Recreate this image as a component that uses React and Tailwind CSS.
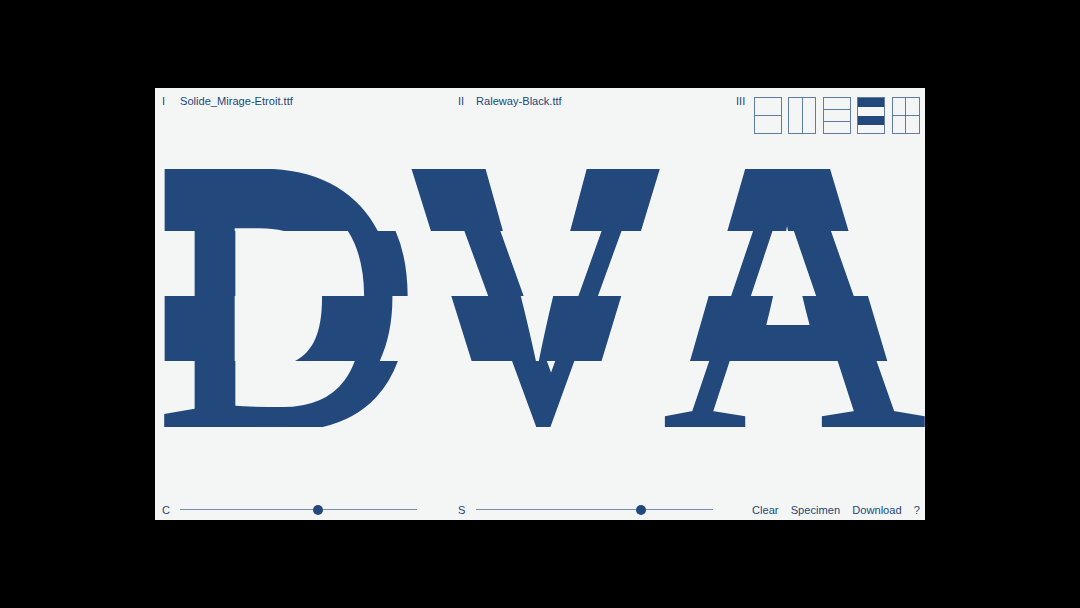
function SansWord({ className }) {
  return (
    <div className={`flex text-[355px] leading-[400px] h-[400px] font-black text-[#22487c] [font-family:Inter,sans-serif] ${className}`}>
      <span className="block shrink-0 w-[231px] ml-[-7px] origin-left scale-x-[1]">D</span>
      <span className="block shrink-0 w-[248px] ml-[25px] origin-left scale-x-[0.933]">V</span>
      <span className="block shrink-0 w-[245px] ml-[12px] origin-left scale-x-[0.886]">A</span>
    </div>
  );
}

function SerifWord({ className }) {
  return (
    <div className={`flex text-[390px] leading-[400px] h-[400px] font-normal text-[#22487c] [-webkit-text-stroke:1.5px_#22487c] [font-family:'Liberation_Serif',serif] ${className}`}>
      <span className="block shrink-0 w-[243px] ml-[2px] origin-left scale-x-[0.93] [-webkit-text-stroke:7px_#22487c]">D</span>
      <span className="block shrink-0 w-[240px] ml-[20px] origin-left scale-x-[0.87]">V</span>
      <span className="block shrink-0 w-[260px] ml-[2px] origin-left scale-x-[0.94]">A</span>
    </div>
  );
}

function Slider({ label, pos }) {
  return (
    <div className="flex items-center">
      <span className="w-[18px]">{label}</span>
      <div className="flex w-[237px] items-center">
        <div className={`h-px bg-[#22487c]/60 ${pos}`} />
        <div className="size-[10px] shrink-0 rounded-full bg-[#22487c]" />
        <div className="h-px flex-1 bg-[#22487c]/60" />
      </div>
    </div>
  );
}

function Box({ children, className = "" }) {
  return <div className={`h-[37px] w-[28px] border border-[#22487c]/70 ${className}`}>{children}</div>;
}

export default function App() {
  return (
    <div className="flex h-[608px] w-[1080px] items-center justify-center bg-black [font-family:'Liberation_Sans',sans-serif] text-[11.1px] text-[#22487c]">
      <div className="flex h-[432px] w-[770px] flex-col overflow-hidden bg-[#f4f6f5]">
        <header className="flex h-[81px] shrink-0 items-start pt-[6px] pl-[7px] pr-[5px]">
          <div className="flex w-[296px] leading-[14px]">
            <span className="w-[18px]">I</span>
            <span>Solide_Mirage-Etroit.ttf</span>
          </div>
          <div className="flex w-[278px] leading-[14px]">
            <span className="w-[18px]">II</span>
            <span>Raleway-Black.ttf</span>
          </div>
          <span className="w-[18px] leading-[14px]">III</span>
          <div className="mt-[3px] flex gap-[6.4px]">
            <Box><div className="mt-[17px] h-px bg-[#22487c]/70" /></Box>
            <Box className="flex justify-center"><div className="h-full w-px bg-[#22487c]/70" /></Box>
            <Box className="flex flex-col justify-evenly">
              <div className="h-px bg-[#22487c]/70" />
              <div className="h-px bg-[#22487c]/70" />
            </Box>
            <Box className="flex flex-col">
              <div className="h-[9px] bg-[#22487c]" />
              <div className="h-[9px]" />
              <div className="h-[9px] bg-[#22487c]" />
            </Box>
            <Box className="relative flex items-center justify-center">
              <div className="h-px w-full bg-[#22487c]/70" />
              <div className="absolute h-full w-px bg-[#22487c]/70" />
            </Box>
          </div>
        </header>

        <main className="h-[258px] shrink-0">
          <div className="h-[62px] overflow-hidden"><SansWord className="mt-[-71px]" /></div>
          <div className="h-[65px] overflow-hidden"><SerifWord className="mt-[-136px]" /></div>
          <div className="h-[65px] overflow-hidden"><SansWord className="mt-[-198px]" /></div>
          <div className="h-[66px] overflow-hidden"><SerifWord className="mt-[-266px]" /></div>
        </main>

        <footer className="mt-auto flex h-[20px] items-center pl-[7px] pr-[5px]">
          <div className="w-[296px]"><Slider label="C" pos="w-[133px]" /></div>
          <div className="w-[294px]"><Slider label="S" pos="w-[160px]" /></div>
          <nav className="flex flex-1 justify-between">
            <span>Clear</span>
            <span>Specimen</span>
            <span>Download</span>
            <span>?</span>
          </nav>
        </footer>
      </div>
    </div>
  );
}
